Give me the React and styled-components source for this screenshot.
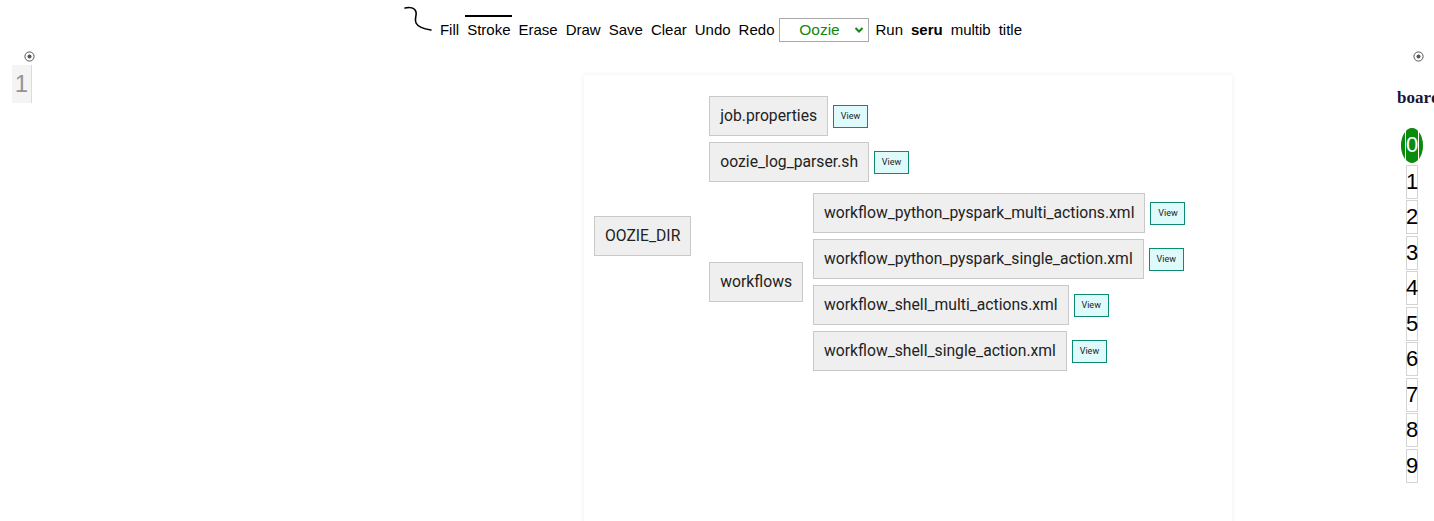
import React from "react";
import styled, { createGlobalStyle } from "styled-components";

const Global = createGlobalStyle`
  html, body { margin: 0; padding: 0; background: #fff; }
  body { font-family: "Liberation Sans", Arial, sans-serif; overflow: hidden; }
`;

const Page = styled.div`
  width: 1434px;
  height: 521px;
  overflow: hidden;
`;

const Toolbar = styled.div`
  display: flex;
  justify-content: center;
  align-items: center;
  gap: 4px;
  padding-top: 15px;
  padding-right: 6px;
  font-size: 15px;
  color: #000;
`;

const Squiggle = styled.svg`
  align-self: flex-start;
  margin-top: -9px;
  margin-right: 2px;
`;

const Tool = styled.span`
  display: block;
  padding: 4px 2px 6px;
  line-height: 18px;
  border-top: 2px solid ${(p) => (p.$active ? "#000" : "transparent")};
  font-weight: ${(p) => (p.$bold ? 700 : 400)};
  white-space: nowrap;
`;

const SelectBox = styled.div`
  width: 88px;
  height: 22px;
  border: 1px solid #a9a9a9;
  background: #fff;
  display: flex;
  align-items: center;
  margin: -1px 0 0 -1px;
  font-size: 15.5px;
  color: #118811;
`;

const SelectLabel = styled.span`
  flex: 1;
  text-align: center;
  padding-left: 4px;
`;

const Chevron = styled.svg`
  margin-right: 4px;
`;

const Main = styled.div`
  display: flex;
  align-items: flex-start;
  padding-top: 6px;
`;

const LeftCol = styled.div`
  width: 572px;
  padding-left: 12px;
  display: flex;
  flex-direction: column;
`;

const Target = styled.svg`
  display: block;
  margin-left: ${(p) => p.$offset}px;
`;

const LineNo = styled.div`
  margin-top: 3px;
  width: 20px;
  height: 38px;
  background: #f4f4f4;
  border-right: 1px solid #dcdcdc;
  box-sizing: border-box;
  color: #949494;
  font-size: 24px;
  line-height: 38px;
  text-align: center;
`;

const Card = styled.div`
  width: 648px;
  height: 470px;
  margin-top: 24px;
  box-sizing: border-box;
  background: #fff;
  box-shadow: 0 0 5px rgba(0, 0, 0, 0.07);
  padding: 21px 10px;
`;

const Branch = styled.div`
  display: flex;
  align-items: center;
  margin: ${(p) => (p.$nested ? "5px 0" : "0")};
`;

const Children = styled.div`
  display: flex;
  flex-direction: column;
  gap: 6px;
  margin-left: ${(p) => p.$indent}px;
`;

const Leaf = styled.div`
  display: flex;
  align-items: center;
  gap: 5px;
`;

const Node = styled.div`
  height: 40px;
  box-sizing: border-box;
  padding: 0 10px;
  background: #efefef;
  border: 1px solid #c9c9c9;
  font-family: Roboto, "Noto Sans", sans-serif;
  font-size: 15.7px;
  line-height: 38px;
  color: #222;
  white-space: nowrap;
`;

const ViewButton = styled.div`
  width: 35px;
  height: 23px;
  box-sizing: border-box;
  border: 1px solid #0d8a72;
  background: #dffafa;
  font-family: Roboto, "Noto Sans", sans-serif;
  font-size: 9px;
  line-height: 21px;
  text-align: center;
  color: #222;
`;

const RightCol = styled.div`
  margin-left: 165px;
  width: 37px;
  flex-shrink: 0;
  display: flex;
  flex-direction: column;
`;

const BoardTitle = styled.div`
  margin-top: 26px;
  font-family: "Liberation Serif", "Times New Roman", serif;
  font-weight: 700;
  font-size: 17px;
  color: #16163a;
  white-space: nowrap;
  line-height: 20px;
`;

const Numbers = styled.div`
  margin-top: 20px;
  width: 30px;
  display: flex;
  flex-direction: column;
  align-items: center;
  gap: 1.5px;
`;

const Num = styled.div`
  box-sizing: border-box;
  height: ${(p) => (p.$active ? 35 : 34)}px;
  width: ${(p) => (p.$active ? 22 : 12)}px;
  border: 1px solid ${(p) => (p.$active ? "#118811" : "#d4d4d4")};
  border-radius: ${(p) => (p.$active ? "50%" : "0")};
  background: ${(p) => (p.$active ? "#0b8b0b" : "#fff")};
  color: ${(p) => (p.$active ? "#fff" : "#000")};
  font-size: 22px;
  line-height: 32px;
  text-align: center;
  display: flex;
  justify-content: center;
`;

const ActiveDigit = styled.span`
  display: block;
  width: 12px;
  border-left: 1px solid #fff;
  border-right: 1px solid #fff;
`;

const TargetIcon = ({ offset }) => (
  <Target $offset={offset} width="11" height="11" viewBox="0 0 11 11">
    <circle cx="5.5" cy="5.5" r="4.6" fill="none" stroke="#555" strokeWidth="1" />
    <circle cx="5.5" cy="5.5" r="2" fill="#555" />
  </Target>
);

const tools = ["Fill", "Stroke", "Erase", "Draw", "Save", "Clear", "Undo", "Redo"];

const ViewLeaf = ({ name }) => (
  <Leaf>
    <Node>{name}</Node>
    <ViewButton>View</ViewButton>
  </Leaf>
);

export default function App() {
  return (
    <Page>
      <Global />
      <Toolbar>
        <Squiggle width="28" height="26" viewBox="0 0 28 26">
          <path
            d="M1 2 C6 1 11 2 12 6 C13 10 10 13 12 17 C14 21 20 23 27 24"
            fill="none"
            stroke="#000"
            strokeWidth="1.6"
            strokeLinecap="round"
          />
        </Squiggle>
        {tools.map((t) => (
          <Tool key={t} $active={t === "Stroke"}>
            {t}
          </Tool>
        ))}
        <SelectBox>
          <SelectLabel>Oozie</SelectLabel>
          <Chevron width="10" height="8" viewBox="0 0 10 8">
            <path d="M1.5 2 L5 5.5 L8.5 2" fill="none" stroke="#118811" strokeWidth="2" />
          </Chevron>
        </SelectBox>
        <Tool>Run</Tool>
        <Tool $bold>seru</Tool>
        <Tool>multib</Tool>
        <Tool>title</Tool>
      </Toolbar>
      <Main>
        <LeftCol>
          <TargetIcon offset={12} />
          <LineNo>1</LineNo>
        </LeftCol>
        <Card>
          <Branch>
            <Node>OOZIE_DIR</Node>
            <Children $indent={18}>
              <ViewLeaf name="job.properties" />
              <ViewLeaf name="oozie_log_parser.sh" />
              <Branch $nested>
                <Node>workflows</Node>
                <Children $indent={10}>
                  <ViewLeaf name="workflow_python_pyspark_multi_actions.xml" />
                  <ViewLeaf name="workflow_python_pyspark_single_action.xml" />
                  <ViewLeaf name="workflow_shell_multi_actions.xml" />
                  <ViewLeaf name="workflow_shell_single_action.xml" />
                </Children>
              </Branch>
            </Children>
          </Branch>
        </Card>
        <RightCol>
          <TargetIcon offset={16} />
          <BoardTitle>board</BoardTitle>
          <Numbers>
            {Array.from({ length: 10 }, (_, i) =>
              i === 0 ? (
                <Num key={i} $active>
                  <ActiveDigit>0</ActiveDigit>
                </Num>
              ) : (
                <Num key={i}>{i}</Num>
              )
            )}
          </Numbers>
        </RightCol>
      </Main>
    </Page>
  );
}
